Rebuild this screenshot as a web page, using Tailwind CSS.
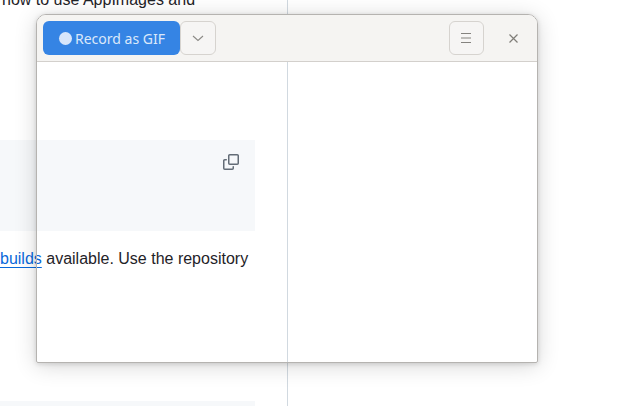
<!DOCTYPE html>
<html lang="en">
<head>
    <meta charset="UTF-8">
    <title>Record as GIF</title>
    <script src="https://cdn.jsdelivr.net/npm/@tailwindcss/browser@4"></script>
</head>
<body class="relative w-[623px] h-[406px] overflow-hidden bg-white font-['Liberation_Sans',sans-serif]">
    <!-- Page behind the window -->
    <div class="flex h-full">
        <div class="w-[287px] h-full shrink-0">
            <div class="w-[255px] flex flex-col">
                <p class="mt-[-12px] h-[24px] shrink-0 text-[16px] leading-[24px] text-[#1f2328] whitespace-nowrap pl-[2px]">how to use AppImages and</p>
                <div class="relative mt-[128px] h-[91px] shrink-0 bg-[#f6f8fa]">
                    <svg class="absolute left-[223px] top-[14px]" width="16" height="16" viewBox="0 0 16 16" fill="#636c76">
                        <path d="M0 6.75C0 5.784.784 5 1.75 5h1.5a.75.75 0 0 1 0 1.5h-1.5a.25.25 0 0 0-.25.25v7.5c0 .138.112.25.25.25h7.5a.25.25 0 0 0 .25-.25v-1.5a.75.75 0 0 1 1.5 0v1.5A1.75 1.75 0 0 1 9.25 16h-7.5A1.75 1.75 0 0 1 0 14.25Z"/>
                        <path d="M5 1.75C5 .784 5.784 0 6.75 0h7.5C15.216 0 16 .784 16 1.75v7.5A1.75 1.75 0 0 1 14.25 11h-7.5A1.75 1.75 0 0 1 5 9.25Zm1.75-.25a.25.25 0 0 0-.25.25v7.5c0 .138.112.25.25.25h7.5a.25.25 0 0 0 .25-.25v-7.5a.25.25 0 0 0-.25-.25Z"/>
                    </svg>
                </div>
                <p class="mt-[16px] h-[24px] shrink-0 text-[16px] leading-[24px] text-[#1f2328] whitespace-nowrap"><a class="text-[#0969da] underline underline-offset-[3px]">builds</a> available. Use the repository</p>
                <div class="mt-[130px] h-[20px] shrink-0 bg-[#f6f8fa]"></div>
            </div>
        </div>
        <div class="w-px h-full bg-[#d1d9e0]"></div>
    </div>

    <!-- Recorder window, its body is see-through -->
    <div class="absolute left-[36px] top-[14px] w-[502px] h-[349px] flex flex-col border border-[#b5b3b0] rounded-t-[10px] rounded-b-[2px] shadow-[0_3px_22px_rgba(0,0,0,0.16),0_1px_5px_rgba(0,0,0,0.14)] overflow-hidden">
        <div class="h-[47px] shrink-0 flex items-center pl-[6px] pr-[6px] bg-[#f5f4f2] border-b border-[#d3d0cc]">
            <button class="w-[137px] h-[34px] flex items-center justify-center gap-[3px] pl-[1px] rounded-[6px] bg-[#3584e4] text-[#dbe8fa] text-[14px] font-['Noto_Sans',sans-serif]">
                <span class="w-[13px] h-[13px] rounded-full bg-[#d7e6fb]"></span>
                Record as GIF
            </button>
            <button class="w-[36px] h-[34px] flex items-center justify-center rounded-[6px] bg-[#f6f5f4] border border-[#d6d3cf]">
                <svg width="12" height="7" viewBox="0 0 12 7" fill="none" stroke="#8c8a86" stroke-width="1.1"><path d="M1 1l5 4.5L11 1"/></svg>
            </button>
            <button class="ml-auto w-[35px] h-[34px] flex items-center justify-center rounded-[6px] bg-[#f6f5f4] border border-[#d6d3cf] pr-[1px]">
                <svg width="10" height="10" viewBox="0 0 10 10" fill="none" stroke="#85837f" stroke-width="1"><path d="M0 .5h10M0 5h10M0 9.500h10"/></svg>
            </button>
            <button class="ml-[12px] w-[35px] h-[34px] flex items-center justify-center">
                <svg width="9" height="9" viewBox="0 0 9 9" fill="none" stroke="#807e79" stroke-width="1.2"><path d="M.5.5l8 8M8.500.5l-8 8"/></svg>
            </button>
        </div>
        <div class="flex-1"></div>
    </div>
</body>
</html>
